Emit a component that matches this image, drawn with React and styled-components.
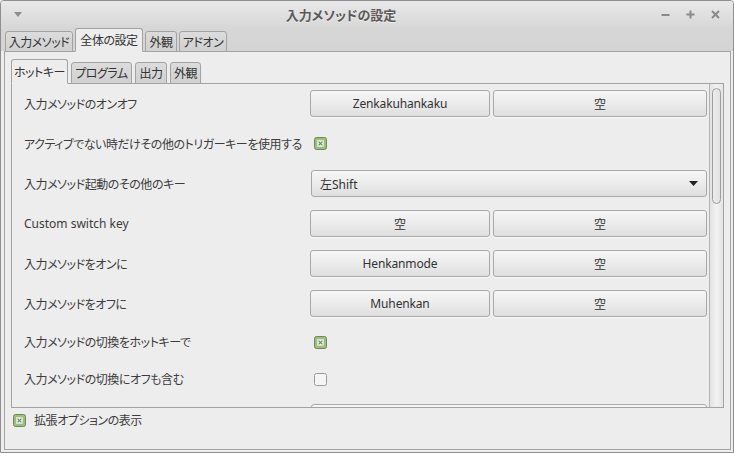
import React from "react";
import styled, { createGlobalStyle } from "styled-components";

const GlobalStyle = createGlobalStyle`
  html, body { margin: 0; padding: 0; background: #ededed; }
  body {
    font-family: "Noto Sans", "Noto Sans CJK JP", sans-serif;
    font-size: 12px;
    color: #3c3c3c;
    font-feature-settings: "palt";
  }
  * { box-sizing: border-box; }
`;

const isJp = (s) => /[^\x00-\x7f]/.test(s);

const Window = styled.div`
  width: 734px;
  height: 453px;
  display: flex;
  flex-direction: column;
  background: #ededed;
  border: 1px solid #8e8e8e;
  border-radius: 4px 4px 0 0;
  overflow: hidden;
`;

const Header = styled.div`
  background: linear-gradient(#e9e9e9, #d6d6d6 28px, #d4d4d4);
`;

const TitleBar = styled.div`
  height: 26px;
  display: flex;
  align-items: center;
`;

const TitleSide = styled.div`
  width: ${(p) => p.w}px;
  display: flex;
  align-items: center;
  justify-content: ${(p) => p.justify || "flex-start"};
  padding: ${(p) => p.pad || "0"};
`;

const Title = styled.div`
  flex: 1;
  text-align: center;
  font-weight: bold;
  font-size: 13px;
  color: #5a5a5a;
  text-shadow: 0 1px 0 rgba(255, 255, 255, 0.6);
`;

const WinButton = styled.div`
  width: 25px;
  height: 26px;
  display: flex;
  align-items: center;
  justify-content: center;
`;

const TabStrip = styled.div`
  height: ${(p) => p.h}px;
  display: flex;
  align-items: flex-end;
  gap: ${(p) => p.gap}px;
  padding-left: ${(p) => p.pl}px;
`;

const Tab = styled.div`
  position: relative;
  z-index: ${(p) => (p.active ? 2 : 1)};
  width: ${(p) => p.w}px;
  height: ${(p) => (p.active ? p.h + 3 : p.h)}px;
  margin-bottom: -1px;
  display: flex;
  align-items: center;
  justify-content: center;
  border: 1px solid #a3a3a3;
  border-bottom-color: ${(p) => (p.active ? "#ededed" : "#a3a3a3")};
  border-radius: 3px 3px 0 0;
  background: ${(p) => (p.active ? "#ededed" : "linear-gradient(#dcdcdc, #d0d0d0)")};
  color: #333;
  white-space: nowrap;
  letter-spacing: -0.45px;
`;

const OuterPanel = styled.div`
  flex: 1;
  margin: 0 2px 2px 3px;
  border: 1px solid #a3a3a3;
  padding: 7px 6px 0 6px;
  display: flex;
  flex-direction: column;
`;

const InnerPanel = styled.div`
  height: 325px;
  flex-shrink: 0;
  border: 1px solid #a3a3a3;
  display: flex;
  background: #ededed;
`;

const Scroller = styled.div`
  flex: 1;
  overflow: hidden;
  padding: 6px 2px 0 0;
  display: flex;
  flex-direction: column;
  gap: 13px;
`;

const Row = styled.div`
  height: ${(p) => p.h}px;
  flex-shrink: 0;
  display: grid;
  grid-template-columns: 298px 1fr;
  align-items: center;
`;

const Label = styled.div`
  padding-left: 12px;
  white-space: nowrap;
  color: #3c3c3c;
  letter-spacing: ${(p) => (p.jp ? "-0.45px" : "0")};
`;

const Controls = styled.div`
  display: grid;
  grid-template-columns: 180px 1fr;
  gap: 3px;
  height: 100%;
`;

const KeyButton = styled.div`
  height: 27px;
  display: flex;
  align-items: center;
  justify-content: center;
  border: 1px solid #a9a9a9;
  border-radius: 3px;
  background: linear-gradient(#f6f6f6, #e9e9e9 60%, #dedede);
  color: #333;
  letter-spacing: -0.15px;
  box-shadow: 0 1px 0 rgba(255, 255, 255, 0.7);
`;

const Combo = styled.div`
  height: 27px;
  margin-left: 1px;
  display: flex;
  align-items: center;
  justify-content: space-between;
  padding: 0 8px 0 8px;
  border: 1px solid #a9a9a9;
  border-radius: 3px;
  background: linear-gradient(#f6f6f6, #e9e9e9 60%, #dedede);
  color: #333;
`;

const CheckCell = styled.div`
  display: flex;
  align-items: center;
  padding-left: ${(p) => p.pl || 0}px;
`;

const Trough = styled.div`
  width: 14px;
  border-left: 1px solid #b4b4b4;
  background: linear-gradient(90deg, #e2e2e2, #f2f2f2 50%, #e4e4e4);
  padding: 4px 2px 0 2px;
`;

const Thumb = styled.div`
  width: 9px;
  height: 116px;
  border: 1px solid #9d9d9d;
  border-radius: 5px;
  background: linear-gradient(90deg, #ececec, #e2e2e2);
`;

const Footer = styled.div`
  height: 22px;
  flex-shrink: 0;
  display: flex;
  align-items: center;
  gap: 8px;
  margin-top: 1px;
  padding-left: 2px;
  color: #3c3c3c;
  letter-spacing: -0.45px;
`;

const CheckBox = ({ checked }) =>
  checked ? (
    <svg width="13" height="13" viewBox="0 0 13 13">
      <rect x="0.5" y="0.5" width="12" height="12" rx="2" fill="#9dbd7e" stroke="#6c8a58" />
      <rect x="3.5" y="3.5" width="6" height="6" fill="#f4f7f0" stroke="#e8efe2" strokeWidth="0.5" />
      <path d="M4.6 4.6 L8.4 8.4 M8.4 4.6 L4.6 8.4" stroke="#6f8c5b" strokeWidth="1.3" />
    </svg>
  ) : (
    <svg width="13" height="13" viewBox="0 0 13 13">
      <rect x="0.5" y="0.5" width="12" height="12" rx="2" fill="#f5f5f5" stroke="#9a9a9a" />
    </svg>
  );

const ArrowDown = ({ color = "#222", w = 9, h = 5 }) => (
  <svg width={w} height={h} viewBox={`0 0 ${w} ${h}`}>
    <path d={`M0 0 L${w} 0 L${w / 2} ${h} Z`} fill={color} />
  </svg>
);

const outerTabs = [
  { t: "入力メソッド", w: 68 },
  { t: "全体の設定", w: 68 },
  { t: "外観", w: 32 },
  { t: "アドオン", w: 48 },
];
const innerTabs = [
  { t: "ホットキー", w: 57 },
  { t: "プログラム", w: 61 },
  { t: "出力", w: 32 },
  { t: "外観", w: 31 },
];

const rows = [
  { label: "入力メソッドのオンオフ", type: "keys", keys: ["Zenkakuhankaku", "空"] },
  { label: "アクティブでない時だけその他のトリガーキーを使用する", type: "check", checked: true, h: 27 },
  { label: "入力メソッド起動のその他のキー", type: "combo", value: "左Shift" },
  { label: "Custom switch key", type: "keys", keys: ["空", "空"] },
  { label: "入力メソッドをオンに", type: "keys", keys: ["Henkanmode", "空"] },
  { label: "入力メソッドをオフに", type: "keys", keys: ["Muhenkan", "空"] },
  { label: "入力メソッドの切換をホットキーで", type: "check", checked: true, h: 24 },
  { label: "入力メソッドの切換にオフも含む", type: "check", checked: false, h: 24 },
  { label: "", type: "combo", value: "" },
];

const App = () => {
  return (
    <>
      <GlobalStyle />
      <Window>
        <Header>
          <TitleBar>
            <TitleSide w={30} pad="0 0 0 13px">
              <ArrowDown color="#8d8d8d" w={8} h={5} />
            </TitleSide>
            <Title>入力メソッドの設定</Title>
            <TitleSide w={82} justify="flex-end" pad="0 5px 0 0">
              <WinButton>
                <svg width="9" height="9" viewBox="0 0 9 9">
                  <path d="M0.5 5 H8.5" stroke="#8a8a8a" strokeWidth="2" />
                </svg>
              </WinButton>
              <WinButton>
                <svg width="9" height="9" viewBox="0 0 9 9">
                  <path d="M0.5 4.5 H8.5 M4.5 0.5 V8.5" stroke="#8a8a8a" strokeWidth="2" />
                </svg>
              </WinButton>
              <WinButton>
                <svg width="9" height="9" viewBox="0 0 9 9">
                  <path d="M1 1 L8 8 M8 1 L1 8" stroke="#8a8a8a" strokeWidth="2" />
                </svg>
              </WinButton>
            </TitleSide>
          </TitleBar>
          <TabStrip h={24} pl={4} gap={2}>
            {outerTabs.map((tab, i) => (
              <Tab key={tab.t} active={i === 1} h={21} w={tab.w}>
                {tab.t}
              </Tab>
            ))}
          </TabStrip>
        </Header>
        <OuterPanel>
          <TabStrip h={24} pl={0} gap={3}>
            {innerTabs.map((tab, i) => (
              <Tab key={tab.t} active={i === 0} h={22} w={tab.w}>
                {tab.t}
              </Tab>
            ))}
          </TabStrip>
          <InnerPanel>
            <Scroller>
              {rows.map((r, i) => (
                <Row key={i} h={r.h || 27}>
                  <Label jp={isJp(r.label)}>{r.label}</Label>
                  {r.type === "keys" && (
                    <Controls>
                      <KeyButton>{r.keys[0]}</KeyButton>
                      <KeyButton>{r.keys[1]}</KeyButton>
                    </Controls>
                  )}
                  {r.type === "combo" && (
                    <Combo>
                      <span>{r.value}</span>
                      <ArrowDown />
                    </Combo>
                  )}
                  {r.type === "check" && (
                    <CheckCell pl={4}>
                      <CheckBox checked={r.checked} />
                    </CheckCell>
                  )}
                </Row>
              ))}
            </Scroller>
            <Trough>
              <Thumb />
            </Trough>
          </InnerPanel>
          <Footer>
            <CheckBox checked />
            <span>拡張オプションの表示</span>
          </Footer>
        </OuterPanel>
      </Window>
    </>
  );
};

export default App;
